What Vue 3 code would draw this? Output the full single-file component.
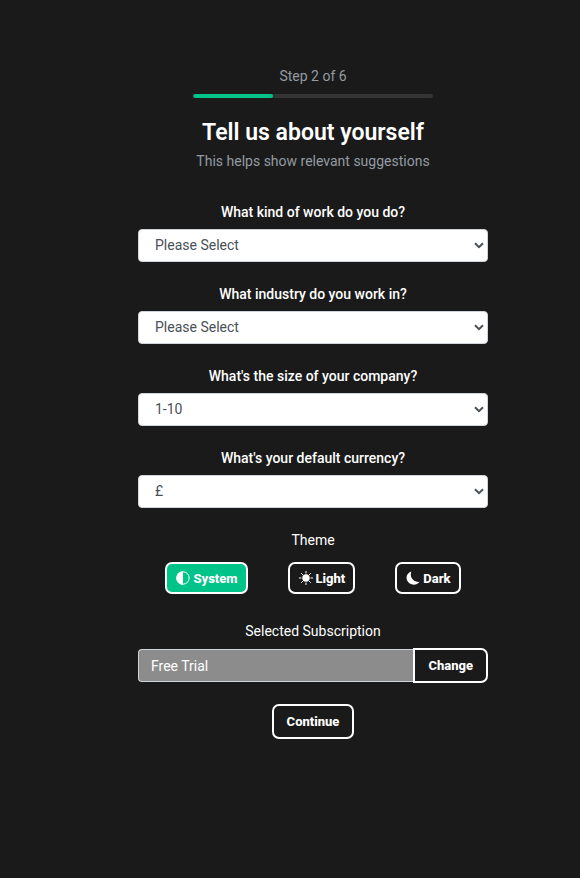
<template>
  <main class="page">
    <form class="setup" @submit.prevent>
      <header class="intro">
        <p class="step">Step {{ step }} of {{ totalSteps }}</p>
        <div class="progress">
          <div class="progress-bar" :style="{ width: `${(step / totalSteps) * 100}%` }"></div>
        </div>
        <h1>Tell us about yourself</h1>
        <p class="subtitle">This helps show relevant suggestions</p>
      </header>

      <div v-for="field in fields" :key="field.id" class="field">
        <label :for="field.id">{{ field.label }}</label>
        <div class="select-wrap">
          <select :id="field.id" v-model="field.value">
            <option v-for="option in field.options" :key="option">{{ option }}</option>
          </select>
          <svg class="chevron" viewBox="0 0 10 7" aria-hidden="true">
            <path d="M1 1.2 5 5.2 9 1.2" />
          </svg>
        </div>
      </div>

      <div class="theme" role="group" aria-labelledby="theme-label">
        <span id="theme-label">Theme</span>
        <div class="theme-buttons">
          <button
            v-for="item in themes"
            :key="item"
            type="button"
            class="btn btn-theme"
            :class="{ active: theme === item }"
            :aria-pressed="theme === item"
            @click="theme = item"
          >
            <svg v-if="item === 'System'" viewBox="0 0 16 16" aria-hidden="true">
              <circle cx="8" cy="8" r="6.2" fill="none" stroke="currentColor" stroke-width="1" />
              <path d="M8 1.3a6.7 6.7 0 0 0 0 13.4z" />
            </svg>
            <svg v-else-if="item === 'Light'" viewBox="0 0 16 16" aria-hidden="true">
              <circle cx="8" cy="8" r="3.7" />
              <path
                d="M8 1v2.5M8 12.5v2.5M1 8h2.5M12.5 8h2.5M3.2 3.2l2 2M10.8 10.8l2 2M3.2 12.8l2-2M10.8 5.2l2-2"
                fill="none"
                stroke="currentColor"
                stroke-width="1"
              />
            </svg>
            <svg v-else viewBox="0 0 16 16" aria-hidden="true">
              <path d="M6.4 1.5C2.3 2.8.6 6.8 2 10.3c2 4.9 9.2 6 12.6 1.5C9.2 12.6 4 7.5 6.4 1.5z" />
            </svg>
            {{ item }}
          </button>
        </div>
      </div>

      <div class="field subscription">
        <label for="subscription">Selected Subscription</label>
        <div class="input-group">
          <input id="subscription" type="text" value="Free Trial" readonly />
          <button type="button" class="btn btn-change">Change</button>
        </div>
      </div>

      <button type="submit" class="btn">Continue</button>
    </form>
  </main>
</template>

<script setup>
import { ref } from 'vue';

const step = 2;
const totalSteps = 6;

const fields = ref([
  {
    id: 'work',
    label: 'What kind of work do you do?',
    value: 'Please Select',
    options: ['Please Select', 'Design', 'Development', 'Marketing', 'Other'],
  },
  {
    id: 'industry',
    label: 'What industry do you work in?',
    value: 'Please Select',
    options: ['Please Select', 'Technology', 'Finance', 'Retail', 'Other'],
  },
  {
    id: 'size',
    label: "What's the size of your company?",
    value: '1-10',
    options: ['1-10', '11-50', '51-200', '200+'],
  },
  {
    id: 'currency',
    label: "What's your default currency?",
    value: '£',
    options: ['£', '$', '€'],
  },
]);

const themes = ['System', 'Light', 'Dark'];
const theme = ref('System');
</script>

<style>
body {
  background: #1a1a1a;
}
</style>

<style scoped>
.page {
  padding: 66px 0 40px 46px;
  color: #fff;
  font-family: Roboto, "Liberation Sans", sans-serif;
  font-size: 14px;
  line-height: 21px;
}

.setup {
  display: flex;
  flex-direction: column;
  align-items: center;
  max-width: 350px;
  margin: 0 auto;
}

.intro {
  display: flex;
  flex-direction: column;
  align-items: center;
  width: 100%;
  margin-bottom: 30px;
}

p,
h1 {
  margin: 0;
}

.step,
.subtitle {
  color: #949ba2;
}

.progress {
  width: 240px;
  height: 4px;
  margin: 7px 0 19px;
  border-radius: 2px;
  background: #343434;
  overflow: hidden;
}

.progress-bar {
  height: 100%;
  border-radius: 2px;
  background: #00c389;
}

h1 {
  font-size: 23px;
  line-height: 32px;
  font-weight: 600;
}

.subtitle {
  margin-top: 2px;
}

.field,
.theme {
  display: flex;
  flex-direction: column;
  align-items: center;
  width: 100%;
  margin-bottom: 22px;
}

label {
  margin-bottom: 6px;
  font-weight: 500;
}

.select-wrap {
  position: relative;
  width: 100%;
}

select {
  display: block;
  box-sizing: border-box;
  width: 100%;
  height: 33px;
  padding: 0 30px 0 16px;
  border: 1px solid #ced4da;
  border-radius: 4px;
  background: #fff;
  color: #495057;
  font: inherit;
  appearance: none;
}

.chevron {
  position: absolute;
  top: 13px;
  right: 4px;
  width: 10px;
  height: 7px;
  fill: none;
  stroke: #495057;
  stroke-width: 2;
  pointer-events: none;
}

.theme {
  margin-bottom: 27px;
}

.theme-buttons {
  display: flex;
  gap: 40px;
  margin-top: 11px;
}

.btn {
  display: flex;
  align-items: center;
  justify-content: center;
  box-sizing: border-box;
  height: 35px;
  padding: 0 13px;
  border: 2px solid #fff;
  border-radius: 7px;
  background: #1a1a1a;
  color: #fff;
  font: inherit;
  font-size: 13px;
  font-weight: 800;
  cursor: pointer;
}

.btn-theme {
  gap: 2px;
  height: 32px;
  padding: 0 8px;
}

.btn-theme svg {
  width: 16px;
  height: 16px;
  fill: currentColor;
}

.btn-theme.active {
  background: #00c389;
}

.subscription {
  margin-bottom: 21px;
}

.subscription label {
  font-weight: 400;
}

.input-group {
  display: flex;
  align-items: center;
  width: 100%;
}

.input-group input {
  flex: 1;
  box-sizing: border-box;
  min-width: 0;
  height: 33px;
  padding: 0 12px;
  border: 1px solid #ced4da;
  border-right: 0;
  border-radius: 4px 0 0 4px;
  background: #8c8c8c;
  color: #fff;
  font: inherit;
}

.btn-change {
  border-radius: 0 7px 7px 0;
}
</style>
